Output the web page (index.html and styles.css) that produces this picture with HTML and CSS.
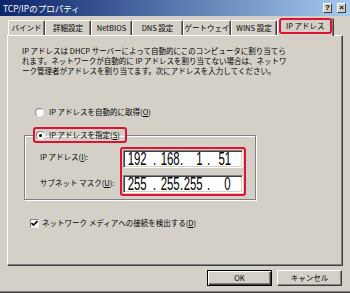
FILE: index.html
```html
<!DOCTYPE html>
<html lang="ja">
<head>
<meta charset="utf-8">
<title>TCP/IPのプロパティ</title>
<link rel="stylesheet" href="styles.css">
</head>
<body>
<div class="window">
  <div class="titlebar">
    <span class="title">TCP/IPのプロパティ</span>
    <div class="tb-btns"><span class="tb-btn">?</span><span class="tb-btn">×</span></div>
  </div>
  <div class="tabs">
    <div class="tab w-bind">バインド</div>
    <div class="tab w-adv">詳細設定</div>
    <div class="tab w-nb">NetBIOS</div>
    <div class="tab w-dns">DNS 設定</div>
    <div class="tab w-gw">ゲートウェイ</div>
    <div class="tab w-wins">WINS 設定</div>
    <div class="tab sel"><span class="mark">IP アドレス</span></div>
  </div>
  <div class="panel">
    <p class="desc">IP アドレスは DHCP サーバーによって自動的にこのコンピュータに割り当てら<br>れます。ネットワークが自動的に IP アドレスを割り当てない場合は、ネットワ<br>ーク管理者がアドレスを割り当てます。次にアドレスを入力してください。</p>
    <div class="opt auto"><span class="radio"></span><span>IP アドレスを自動的に取得(<u>O</u>)</span></div>
    <fieldset class="group">
      <legend class="mark opt legend"><span class="radio on"></span><span>IP アドレスを指定(<u>S</u>)</span></legend>
      <div class="fields">
        <div class="labels">
          <div class="lbl">IP アドレス(<u>I</u>):</div>
          <div class="lbl">サブネット マスク(<u>U</u>):</div>
        </div>
        <div class="ipbox mark">
          <div class="ip">
            <span class="cell c1"><span class="num">192</span></span><span class="cell dot d1"><span class="num">.</span></span><span class="cell c2"><span class="num">168</span></span><span class="cell dot d2"><span class="num">.</span></span><span class="cell c3"><span class="num">1</span></span><span class="cell dot d3"><span class="num">.</span></span><span class="cell c4"><span class="num">51</span></span>
          </div>
          <div class="ip">
            <span class="cell c1"><span class="num">255</span></span><span class="cell dot d1"><span class="num">.</span></span><span class="cell c2"><span class="num">255</span></span><span class="cell dot d2"><span class="num">.</span></span><span class="cell c3"><span class="num">255</span></span><span class="cell dot d3"><span class="num">.</span></span><span class="cell c4"><span class="num">0</span></span>
          </div>
        </div>
      </div>
    </fieldset>
    <div class="opt check">
      <span class="cbox"><svg width="7" height="7" viewBox="0 0 7 7"><path d="M0.5 3 L2.5 5 L6.5 1" fill="none" stroke="#000" stroke-width="1.6"/></svg></span>
      <span>ネットワーク メディアへの接続を検出する(<u>D</u>)</span>
    </div>
  </div>
  <div class="btnrow">
    <button class="btn def">OK</button>
    <button class="btn">キャンセル</button>
  </div>
</div>
</body>
</html>
```
FILE: styles.css
```css
* { box-sizing: border-box; }
html, body { margin: 0; }
body {
  width: 350px;
  height: 293px;
  overflow: hidden;
  background: #d4d0c8;
  font-family: "Noto Sans CJK JP", "Noto Sans", sans-serif;
  font-size: 7.5px;
  line-height: 10px;
  color: #000;
}
.window {
  height: 293px;
  display: flex;
  flex-direction: column;
  border-bottom: 1px solid #404040;
  box-shadow: inset 0 -1px 0 #808080;
}
.titlebar {
  height: 16px;
  flex: none;
  display: flex;
  align-items: center;
  justify-content: space-between;
  padding: 0 4px 0 3px;
  background: linear-gradient(to right, #0a246a, #a6caf0);
}
.title { color: #fff; font-size: 8.5px; }
.tb-btns { display: flex; gap: 5px; }
.tb-btn {
  width: 9px;
  height: 10px;
  background: #d4d0c8;
  border: 1px solid;
  border-color: #fff #404040 #404040 #fff;
  font: bold 8px/8px "Liberation Sans", sans-serif;
  display: flex;
  align-items: center;
  justify-content: center;
}
.tabs {
  height: 17px;
  flex: none;
  margin-top: 2px;
  padding-left: 8px;
  display: flex;
  align-items: flex-end;
  position: relative;
  z-index: 1;
}
.tab {
  height: 15px;
  border-top: 1px solid #fff;
  border-left: 1px solid #fff;
  border-right: 1px solid #404040;
  border-radius: 2px 2px 0 0;
  box-shadow: inset -1px 0 #808080;
  display: flex;
  align-items: center;
  justify-content: center;
  white-space: nowrap;
}
.w-bind { width: 37px; }
.w-adv { width: 46px; }
.w-nb { width: 41px; }
.w-dns { width: 51px; }
.w-gw { width: 48px; }
.w-wins { width: 46px; }
.tab.sel {
  height: 18px;
  margin-bottom: -1px;
  padding: 0 1px;
  border-top: none;
  background: #d4d0c8;
  align-items: flex-start;
}
.mark { border: 2px solid #dc1431; border-radius: 3px; }
.tab.sel .mark {
  height: 16px;
  padding: 0 5px;
  display: flex;
  align-items: center;
}
.panel {
  height: 231px;
  flex: none;
  margin: 0 7px;
  border: 1px solid;
  border-color: #fff #404040 #404040 #fff;
  box-shadow: inset -1px -1px 0 #808080;
  padding: 10px 0 0 14px;
  display: flex;
  flex-direction: column;
  align-items: flex-start;
}
.desc { margin: 0; white-space: nowrap; }
.opt { display: flex; align-items: center; height: 10px; white-space: nowrap; }
.auto { margin: 31px 0 0 13px; }
.radio {
  width: 9px;
  height: 9px;
  flex: none;
  border-radius: 50%;
  background: #fff;
  border: 1px solid;
  border-color: #808080 #e8e8e8 #e8e8e8 #808080;
  margin-right: 5px;
  display: flex;
  align-items: center;
  justify-content: center;
}
.radio.on::before {
  content: "";
  width: 3px;
  height: 3px;
  border-radius: 50%;
  background: #000;
}
.group {
  margin: 10px 0 0 2px;
  width: 232px;
  padding: 0 0 3px 15px;
  border: 1px solid #808080;
  box-shadow: inset 1px 1px 0 #fff, 1px 1px 0 #fff;
  min-inline-size: 0;
}
.legend {
  height: 16px;
  margin-left: -7px;
  padding: 0 5px 0 1px;
}
.legend .radio { margin-right: 4px; }
.fields { display: flex; margin-top: 4px; }
.labels {
  width: 80px;
  padding-top: 1px;
  display: flex;
  flex-direction: column;
  gap: 8px;
}
.lbl { height: 18px; display: flex; align-items: center; white-space: nowrap; }
.ipbox {
  padding: 1px;
  display: flex;
  flex-direction: column;
  gap: 7px;
}
.ip {
  width: 120px;
  height: 18px;
  background: #fff;
  border: 1px solid;
  border-color: #808080 #fff #fff #808080;
  box-shadow: inset 1px 1px 0 #404040, inset -1px -1px 0 #d4d0c8;
  display: flex;
  font: 19px/16px "Liberation Sans", sans-serif;
}
.cell { display: flex; justify-content: flex-end; height: 16px; }
.num { display: inline-block; transform: scaleX(0.6); transform-origin: right center; }
.cell.dot { justify-content: center; }
.cell.dot .num { transform-origin: center; }
.c1 { width: 23px; }
.d1 { width: 16px; }
.c2 { width: 17px; }
.d2 { width: 4px; }
.c3 { width: 19px; }
.d3 { width: 12px; }
.c4 { width: 16px; }
.check { margin: 18px 0 0 8px; }
.cbox {
  width: 9px;
  height: 9px;
  flex: none;
  background: #fff;
  border: 1px solid;
  border-color: #808080 #e8e8e8 #e8e8e8 #808080;
  margin-right: 3px;
  display: flex;
  align-items: center;
  justify-content: center;
}
.btnrow {
  flex: none;
  margin-top: 4px;
  padding-right: 8px;
  display: flex;
  justify-content: flex-end;
  gap: 5px;
}
.btn {
  width: 65px;
  height: 16px;
  padding: 0;
  font: inherit;
  background: #d4d0c8;
  border: 1px solid;
  border-color: #fff #404040 #404040 #fff;
  box-shadow: inset -1px -1px 0 #808080;
  color: #000;
}
.btn.def {
  border-color: #000;
  box-shadow: inset 1px 1px 0 #fff, inset -1px -1px 0 #404040, inset -2px -2px 0 #808080;
}
```
